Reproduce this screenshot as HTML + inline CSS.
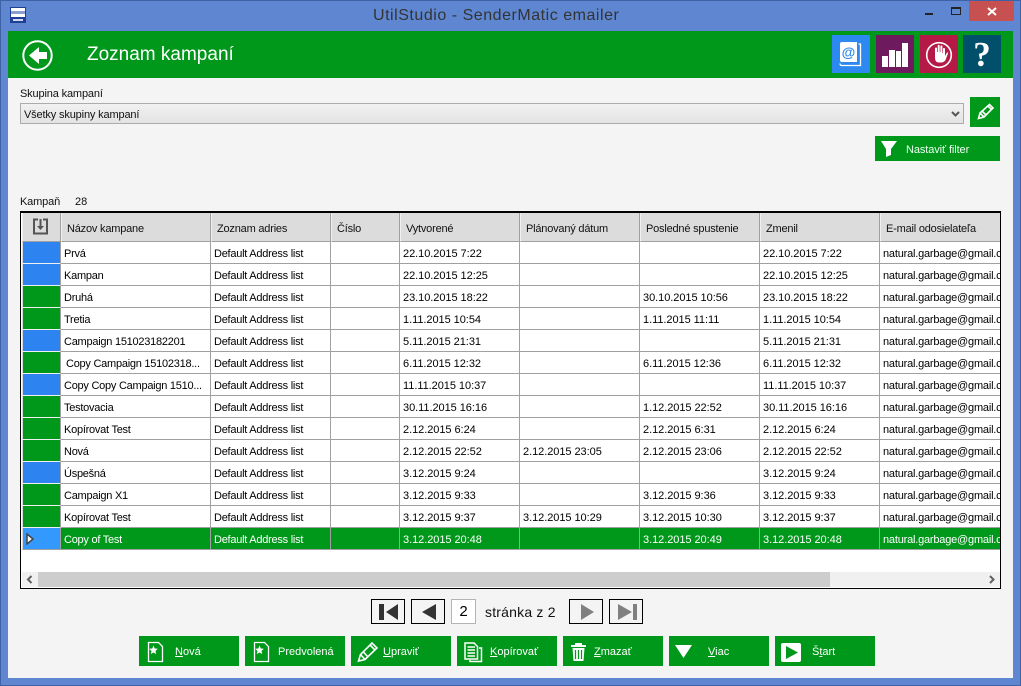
<!DOCTYPE html>
<html><head><meta charset="utf-8"><style>
*{box-sizing:border-box}
html,body{margin:0;padding:0}
body{width:1021px;height:686px;position:relative;overflow:hidden;background:#5f87d1;font:11px/14px "Liberation Sans",sans-serif;color:#000}
.a{position:absolute;white-space:nowrap}
.btn{position:absolute;background:#00981a;color:#fff;height:30px;top:636px;width:100px}
.btn span{position:absolute;top:9px;white-space:nowrap}
.btn svg{position:absolute;left:0;top:0}
.pg{position:absolute;top:599px;height:25px;width:34px;border:1px solid #000;background:#f4f4f4}
table{border-collapse:separate;border-spacing:0;table-layout:fixed;width:1140px;position:absolute;left:0;top:0}
th{height:29px;background:#dcdcdc;font-weight:normal;text-align:left;vertical-align:top;padding:9px 0 0 5px;border-right:1px solid #a0a0a0;border-left:1px solid #f0f0f0;border-bottom:1px solid #a0a0a0;color:#111;letter-spacing:-.2px}
td{height:22px;padding:5px 0 0 3px;vertical-align:top;background:#fff;border-right:1px solid #a0a0a0;border-bottom:1px solid #a0a0a0;white-space:nowrap;overflow:hidden;color:#000;letter-spacing:-.25px}
td:nth-child(n+5):nth-child(-n+8){letter-spacing:-.05px}
td:nth-child(9){letter-spacing:-.2px}
td.b,td.g{padding:0;border-bottom:1px solid #f0f0f0;border-left:1px solid #dcdcdc}
td.b{background:#2d83ef}
td.g{background:#00981a}
tr.s td{background:#00981a;color:#fff}
tr.s td.i{background:#3399ff;border-bottom:1px solid #a0a0a0;border-left:1px solid #dcdcdc}
</style></head><body>
<div class="a" style="left:0;top:0;width:1021px;height:686px;border:1px solid #3f62a6"></div>
<svg class="a" style="left:10px;top:7px" width="16" height="16"><rect width="16" height="16" fill="#1f3f95"/><rect x="1" y="1" width="14" height="9" fill="#fff"/><rect x="1" y="4" width="14" height="3" fill="#8a9fd0"/><rect x="3" y="12" width="10" height="2" fill="#cfd8ee"/></svg>
<div class="a" style="left:373px;top:6px;width:246px;text-align:center;font-size:16px;letter-spacing:.53px;line-height:19px;color:#333">UtilStudio - SenderMatic emailer</div>
<div class="a" style="left:925px;top:13px;width:8px;height:2px;background:#222"></div>
<div class="a" style="left:951px;top:7px;width:10px;height:8px;border:1px solid #222;border-top-width:2px"></div>
<div class="a" style="left:969px;top:1px;width:45px;height:20px;background:#c75050"></div>
<svg class="a" style="left:987px;top:7px" width="10" height="9"><path d="M1 1L9 8M9 1L1 8" stroke="#fff" stroke-width="2"/></svg>

<div class="a" style="left:8px;top:31px;width:1005px;height:647px;background:#f4f4f4"></div>
<div class="a" style="left:8px;top:31px;width:1005px;height:47px;background:#00981a"></div>
<svg class="a" style="left:22px;top:40px" width="32" height="32"><circle cx="15.5" cy="15.5" r="14.2" fill="none" stroke="#fff" stroke-width="2"/><path d="M7 15.5L17 7V12H25V19H17V24Z" fill="#fff"/></svg>
<div class="a" style="left:87px;top:43px;font-size:19px;line-height:24px;color:#fff">Zoznam kampaní</div>

<div class="a" style="left:832px;top:35px;width:38px;height:38px;background:#2d89ef"></div>
<svg class="a" style="left:832px;top:35px" width="38" height="38"><path d="M10 7H25V27H10Q8 27 8 25V9Q8 7 10 7Z" fill="#fff"/><path d="M26.500 9H28.500V30.500H10Q8 30.500 8 28.500" fill="none" stroke="#fff" stroke-width="1.300"/><text x="16.500" y="22" text-anchor="middle" font-family="Liberation Sans" font-size="14" font-weight="bold" fill="#2d89ef">@</text></svg>
<div class="a" style="left:876px;top:35px;width:38px;height:38px;background:#6d1a5e"></div>
<svg class="a" style="left:876px;top:35px" width="38" height="38"><path d="M6 21H12V32H6ZM13 15H19V32H13ZM20 16H25V32H20ZM26 8H32V32H26Z" fill="#fff"/></svg>
<div class="a" style="left:920px;top:35px;width:38px;height:38px;background:#b51a47"></div>
<svg class="a" style="left:920px;top:35px" width="38" height="38"><circle cx="19" cy="20" r="12.300" fill="none" stroke="#fff" stroke-width="1.600"/><path d="M15 13Q16 12 17 13V17H17.700V10.500Q18.700 9 19.700 10.500V17H20.400V11Q21.400 9.800 22.400 11V18H23V13.500Q24 12.500 25 13.500V21L27 17.500Q28 17 28 18.500L25.500 25Q24 27.500 21 27.500H19Q15 27.500 15 23Z" fill="#fff"/></svg>
<div class="a" style="left:963px;top:35px;width:38px;height:38px;background:#004f6b"></div>
<div class="a" style="left:963px;top:35px;width:38px;height:38px;text-align:center;color:#fff;font:bold 35px/39px 'Liberation Serif',serif">?</div>

<div class="a" style="left:20px;top:87px;color:#111;letter-spacing:-.15px">Skupina kampaní</div>
<div class="a" style="left:20px;top:103px;width:944px;height:21px;background:linear-gradient(#f1f1f1,#e3e3e3);border:1px solid #acacac"></div>
<div class="a" style="left:24px;top:108px;color:#111;letter-spacing:-.15px">Všetky skupiny kampaní</div>
<svg class="a" style="left:951px;top:111px" width="10" height="7"><path d="M1 1L4.500 4.500L8 1" fill="none" stroke="#555" stroke-width="2"/></svg>
<div class="a" style="left:970px;top:97px;width:30px;height:30px;background:#00981a"></div>
<svg class="a" style="left:970px;top:97px" width="30" height="30"><path d="M8.500 21.500L10 16L19.500 7.500L23 11L14 20ZM10 16L14 20M18 9L21.500 12.500M12 14L16 18" fill="none" stroke="#fff" stroke-width="1.600"/></svg>
<div class="a" style="left:875px;top:136px;width:125px;height:25px;background:#00981a"></div>
<svg class="a" style="left:880px;top:140px" width="18" height="18"><path d="M1 1H17L11 9V15L6 17V9Z" fill="#fff"/></svg>
<div class="a" style="left:906px;top:143px;color:#eafff0;letter-spacing:-.1px">Nastaviť filter</div>

<div class="a" style="left:20px;top:195px;color:#111;letter-spacing:-.15px">Kampaň</div>
<div class="a" style="left:75px;top:195px;color:#111">28</div>

<div class="a" style="left:20px;top:211px;width:981px;height:378px;background:#fff;border:1px solid #000;border-top-width:2px"></div>
<div class="a" style="left:22px;top:213px;width:978px;height:337px;overflow:hidden">
<table><colgroup><col style="width:39px"><col style="width:150px"><col style="width:120px"><col style="width:69px"><col style="width:120px"><col style="width:120px"><col style="width:120px"><col style="width:120px"><col style="width:283px"></colgroup>
<tr><th></th><th>Názov kampane</th><th>Zoznam adries</th><th>Číslo</th><th>Vytvorené</th><th>Plánovaný dátum</th><th>Posledné spustenie</th><th>Zmenil</th><th>E-mail odosielateľa</th></tr>
<tr><td class="b"></td><td>Prvá</td><td>Default Address list</td><td></td><td>22.10.2015 7:22</td><td></td><td></td><td>22.10.2015 7:22</td><td>natural.garbage@gmail.com</td></tr>
<tr><td class="b"></td><td>Kampan</td><td>Default Address list</td><td></td><td>22.10.2015 12:25</td><td></td><td></td><td>22.10.2015 12:25</td><td>natural.garbage@gmail.com</td></tr>
<tr><td class="g"></td><td>Druhá</td><td>Default Address list</td><td></td><td>23.10.2015 18:22</td><td></td><td>30.10.2015 10:56</td><td>23.10.2015 18:22</td><td>natural.garbage@gmail.com</td></tr>
<tr><td class="g"></td><td>Tretia</td><td>Default Address list</td><td></td><td>1.11.2015 10:54</td><td></td><td>1.11.2015 11:11</td><td>1.11.2015 10:54</td><td>natural.garbage@gmail.com</td></tr>
<tr><td class="b"></td><td>Campaign 151023182201</td><td>Default Address list</td><td></td><td>5.11.2015 21:31</td><td></td><td></td><td>5.11.2015 21:31</td><td>natural.garbage@gmail.com</td></tr>
<tr><td class="g"></td><td style="padding-left:5px">Copy Campaign 15102318...</td><td>Default Address list</td><td></td><td>6.11.2015 12:32</td><td></td><td>6.11.2015 12:36</td><td>6.11.2015 12:32</td><td>natural.garbage@gmail.com</td></tr>
<tr><td class="b"></td><td>Copy Copy Campaign 1510...</td><td>Default Address list</td><td></td><td>11.11.2015 10:37</td><td></td><td></td><td>11.11.2015 10:37</td><td>natural.garbage@gmail.com</td></tr>
<tr><td class="g"></td><td>Testovacia</td><td>Default Address list</td><td></td><td>30.11.2015 16:16</td><td></td><td>1.12.2015 22:52</td><td>30.11.2015 16:16</td><td>natural.garbage@gmail.com</td></tr>
<tr><td class="g"></td><td>Kopírovat Test</td><td>Default Address list</td><td></td><td>2.12.2015 6:24</td><td></td><td>2.12.2015 6:31</td><td>2.12.2015 6:24</td><td>natural.garbage@gmail.com</td></tr>
<tr><td class="g"></td><td>Nová</td><td>Default Address list</td><td></td><td>2.12.2015 22:52</td><td>2.12.2015 23:05</td><td>2.12.2015 23:06</td><td>2.12.2015 22:52</td><td>natural.garbage@gmail.com</td></tr>
<tr><td class="b"></td><td>Úspešná</td><td>Default Address list</td><td></td><td>3.12.2015 9:24</td><td></td><td></td><td>3.12.2015 9:24</td><td>natural.garbage@gmail.com</td></tr>
<tr><td class="g"></td><td>Campaign X1</td><td>Default Address list</td><td></td><td>3.12.2015 9:33</td><td></td><td>3.12.2015 9:36</td><td>3.12.2015 9:33</td><td>natural.garbage@gmail.com</td></tr>
<tr><td class="g"></td><td>Kopírovat Test</td><td>Default Address list</td><td></td><td>3.12.2015 9:37</td><td>3.12.2015 10:29</td><td>3.12.2015 10:30</td><td>3.12.2015 9:37</td><td>natural.garbage@gmail.com</td></tr>
<tr class="s"><td class="i"></td><td>Copy of Test</td><td>Default Address list</td><td></td><td>3.12.2015 20:48</td><td></td><td>3.12.2015 20:49</td><td>3.12.2015 20:48</td><td>natural.garbage@gmail.com</td></tr>
</table>
</div>
<svg class="a" style="left:32px;top:218px" width="17" height="17"><path d="M6 1.500H2V15.500H15V1.500H11" fill="none" stroke="#555" stroke-width="2"/><path d="M8.500 1V8" stroke="#555" stroke-width="2"/><path d="M5 8H12L8.500 12Z" fill="#555"/></svg>
<svg class="a" style="left:26px;top:533px" width="9" height="12"><path d="M1 1L7 6L1 11Z" fill="#fff" stroke="#444" stroke-width="1.500"/></svg>

<div class="a" style="left:22px;top:572px;width:978px;height:15px;background:#f0f0f0"></div>
<div class="a" style="left:38px;top:572px;width:792px;height:15px;background:#cdcdcd"></div>
<svg class="a" style="left:26px;top:575px" width="8" height="9"><path d="M5.500 1L2 4.500L5.500 8" fill="none" stroke="#606060" stroke-width="2"/></svg>
<svg class="a" style="left:988px;top:575px" width="8" height="9"><path d="M2 1L5.500 4.500L2 8" fill="none" stroke="#606060" stroke-width="2"/></svg>

<div class="pg" style="left:371px"><svg width="32" height="23"><path d="M7 4H12V20H7ZM14 12L26 4V20Z" fill="#333"/></svg></div>
<div class="pg" style="left:411px"><svg width="32" height="23"><path d="M10 12L24 4V20Z" fill="#333"/></svg></div>
<div class="a" style="left:451px;top:599px;width:25px;height:25px;background:#fff;border:1px solid #b4b4b4;text-align:center;font-size:15px;line-height:23px">2</div>
<div class="a" style="left:485px;top:604px;font-size:14px;letter-spacing:.2px;line-height:16px;color:#111">stránka z 2</div>
<div class="pg" style="left:569px"><svg width="32" height="23"><path d="M11 4L24 12L11 20Z" fill="#808080"/></svg></div>
<div class="pg" style="left:609px"><svg width="32" height="23"><path d="M8 4L22 12L8 20ZM23 4H27V20H23Z" fill="#808080"/></svg></div>

<div class="btn" style="left:139px"><svg width="30" height="30"><path d="M9.500 6.500H19.500L23.500 10.500V25.500H9.500Z" fill="none" stroke="#fff" stroke-width="1.300"/><path d="M14.500 9.500L15.700 12.500L18.800 12.800L16.500 15L17.200 18L14.500 16.500L11.800 18L12.500 15L10.200 12.800L13.300 12.500Z" fill="#fff"/></svg><span style="left:36px"><u>N</u>ová</span></div>
<div class="btn" style="left:245px"><svg width="30" height="30"><path d="M9.500 6.500H19.500L23.500 10.500V25.500H9.500Z" fill="none" stroke="#fff" stroke-width="1.300"/><path d="M14.500 9.500L15.700 12.500L18.800 12.800L16.500 15L17.200 18L14.500 16.500L11.800 18L12.500 15L10.200 12.800L13.300 12.500Z" fill="#fff"/></svg><span style="left:33px">Predvolená</span></div>
<div class="btn" style="left:351px"><svg width="30" height="30"><path d="M7.500 25L9.500 18.500L21 7L26 12L14 23.500ZM9.500 18.500L14 23.500M19 9L24 14M12.500 16L16.500 20.500" fill="none" stroke="#fff" stroke-width="1.600"/></svg><span style="left:32px"><u>U</u>praviť</span></div>
<div class="btn" style="left:457px"><svg width="30" height="30"><path d="M8 7H17L20.500 10.500V23H8Z" fill="none" stroke="#fff" stroke-width="1.500"/><path d="M10.500 11H18M10.500 14H18M10.500 17H18M10.500 20H18" stroke="#fff" stroke-width="1.500"/><path d="M22 12H24.500V25.500H13V24" fill="none" stroke="#fff" stroke-width="1.500"/></svg><span style="left:33px"><u>K</u>opírovať</span></div>
<div class="btn" style="left:563px"><svg width="30" height="30"><path d="M8 9H23V11H8ZM12 7H19V9H12Z" fill="#fff"/><path d="M9.500 12H21.500L20.500 25H10.500Z" fill="#fff"/><path d="M12.500 14V23M15.500 14V23M18.500 14V23" stroke="#00981a" stroke-width="1.200"/></svg><span style="left:31px"><u>Z</u>mazať</span></div>
<div class="btn" style="left:669px"><svg width="30" height="30"><path d="M6 9H23L14.500 22Z" fill="#fff"/></svg><span style="left:39px"><u>V</u>iac</span></div>
<div class="btn" style="left:775px"><svg width="30" height="30"><rect x="6" y="7" width="20" height="19" rx="2" fill="#fff"/><path d="M11 10L23 16.500L11 23Z" fill="#00981a"/></svg><span style="left:37px">Š<u>t</u>art</span></div>
</body></html>
